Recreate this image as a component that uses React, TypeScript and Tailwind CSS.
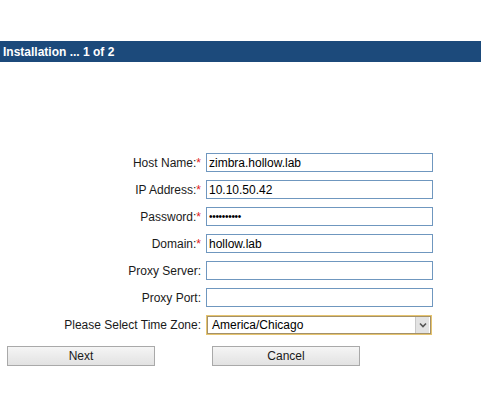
import React from "react";

const font = { fontFamily: '"Liberation Sans", Arial, sans-serif' };

function Row({
  label,
  required,
  children,
}: {
  label: string;
  required?: boolean;
  children: React.ReactNode;
}) {
  return (
    <div className="flex items-center h-[27px]">
      <div className="w-[202px] pr-[1px] text-right text-[12px] text-[#1a1a1a] whitespace-nowrap">
        {label}:
        {required && <sup className="text-[#e02020] text-[12px] relative top-[0px]">*</sup>}
      </div>
      <div className="ml-[4px]">{children}</div>
    </div>
  );
}

function TextBox({ value = "", dots }: { value?: string; dots?: boolean }) {
  return (
    <div className="w-[227px] h-[19px] border border-[#6f97bf] bg-white flex items-center px-[2px] text-[12px] text-black">
      {dots ? <span className="text-[10px] tracking-[-0.3px]">{value}</span> : value}
    </div>
  );
}

export default function App() {
  return (
    <div className="w-[481px] h-[393px] bg-white pt-[41px] overflow-hidden" style={font}>
      {/* Header */}
      <div className="h-[21px] bg-[#1c4a7b] flex items-center pl-[3px] text-white font-bold text-[12px]">
        Installation ... 1 of 2
      </div>

      {/* Form */}
      <div className="mt-[87px] flex flex-col">
        <Row label="Host Name" required>
          <TextBox value="zimbra.hollow.lab" />
        </Row>
        <Row label="IP Address" required>
          <TextBox value="10.10.50.42" />
        </Row>
        <Row label="Password" required>
          <TextBox value="••••••••••" dots />
        </Row>
        <Row label="Domain" required>
          <TextBox value="hollow.lab" />
        </Row>
        <Row label="Proxy Server">
          <TextBox />
        </Row>
        <Row label="Proxy Port">
          <TextBox />
        </Row>
        <Row label="Please Select Time Zone">
          <div className="w-[226px] h-[20px] border border-[#e6c46e] shadow-[inset_0_0_0_1px_#a4916a] bg-white flex items-center pl-[5px] pr-[2px] text-[12px] text-black">
            <span className="flex-1">America/Chicago</span>
            <div className="w-[14px] h-[16px] bg-[#e3e3e3] border-l border-[#c8c8c8] flex items-center justify-center">
              <svg width="8" height="6" viewBox="0 0 8 6">
                <path d="M1 1.5 L4 4.5 L7 1.5" stroke="#555" strokeWidth="1.6" fill="none" />
              </svg>
            </div>
          </div>
        </Row>
      </div>

      {/* Buttons */}
      <div className="mt-[8px] flex pl-[7px] gap-[57px]">
        <button className="w-[148px] h-[20px] border border-[#a9a9a9] bg-gradient-to-b from-[#f5f5f5] to-[#e2e2e2] text-[12px] text-[#1a1a1a]">
          Next
        </button>
        <button className="w-[148px] h-[20px] border border-[#a9a9a9] bg-gradient-to-b from-[#f5f5f5] to-[#e2e2e2] text-[12px] text-[#1a1a1a]">
          Cancel
        </button>
      </div>
    </div>
  );
}
